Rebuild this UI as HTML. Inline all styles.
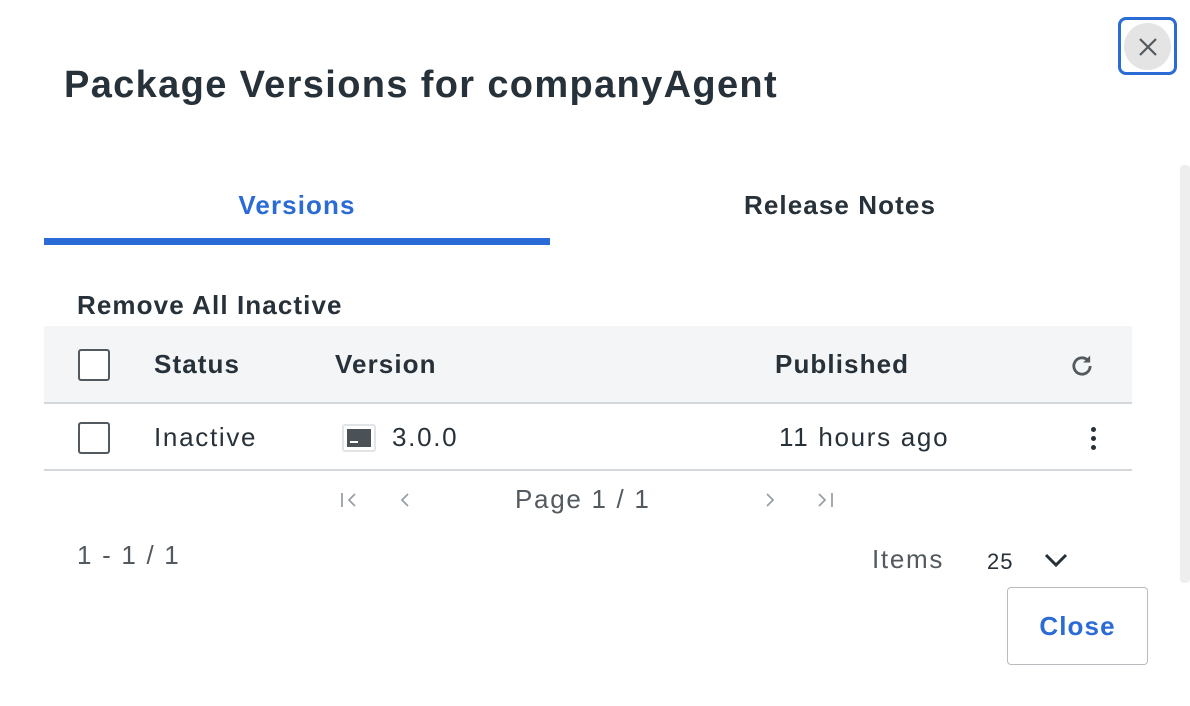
<!DOCTYPE html>
<html><head><style>
*{margin:0;padding:0;box-sizing:border-box}
body{width:1190px;height:706px;background:#fff;font-family:"Liberation Sans",sans-serif;color:#273139;position:relative;overflow:hidden}
.a{position:absolute;white-space:nowrap}
.b{letter-spacing:1.1px}
.r{letter-spacing:1.7px}
.cb{position:absolute;width:32px;height:32px;border:2.5px solid #525a60;border-radius:3px;background:#fff}
</style></head><body>
<div class="a" style="left:1118px;top:17px;width:59px;height:58px;border:3px solid #2b6bd6;border-radius:8px"></div>
<div class="a" style="left:1124px;top:23px;width:47px;height:47px;border-radius:50%;background:#e4e4e4"></div>
<svg class="a" style="left:1137px;top:36px" width="22" height="22"><path d="M3 3L19 19M19 3L3 19" stroke="#525a60" stroke-width="2.2"/></svg>
<div class="a" style="left:64px;top:64px;font-size:38px;font-weight:bold;letter-spacing:1.35px">Package Versions for companyAgent</div>
<div class="a b" style="left:44px;top:190px;width:506px;text-align:center;font-size:26px;font-weight:bold;color:#2b6bd6">Versions</div>
<div class="a b" style="left:590px;top:190px;width:500px;text-align:center;font-size:26px;font-weight:bold">Release Notes</div>
<div class="a" style="left:44px;top:238px;width:506px;height:7px;background:#2b6bd6"></div>
<div class="a" style="left:1180px;top:165px;width:10px;height:418px;background:#eee;border-radius:4px"></div>
<div class="a b" style="left:77px;top:290px;font-size:26px;font-weight:bold">Remove All Inactive</div>
<div class="a" style="left:44px;top:326px;width:1088px;height:78px;background:#f4f5f7;border-bottom:2px solid #d4d8db"></div>
<div class="cb" style="left:78px;top:349px"></div>
<div class="a b" style="left:154px;top:349px;font-size:26px;font-weight:bold">Status</div>
<div class="a b" style="left:335px;top:349px;font-size:26px;font-weight:bold">Version</div>
<div class="a b" style="left:775px;top:349px;font-size:26px;font-weight:bold">Published</div>
<svg class="a" style="left:1068px;top:352px" width="28" height="28" viewBox="0 0 24 24"><path d="M19 12a7 7 0 1 1-2.1-5" fill="none" stroke="#525a60" stroke-width="2.4"/><path d="M19 3v6h-6z" fill="#525a60"/></svg>
<div class="cb" style="left:78px;top:422px"></div>
<div class="a r" style="left:154px;top:422px;font-size:26px">Inactive</div>
<div class="a" style="left:342px;top:424px;width:34px;height:28px;border:2px solid #e2e4e6;border-radius:3px;background:#fff"></div>
<div class="a" style="left:347px;top:429px;width:24px;height:18px;background:#4a5157"></div>
<div class="a" style="left:350px;top:441px;width:8px;height:2px;background:#fff"></div>
<div class="a r" style="left:392px;top:422px;font-size:26px">3.0.0</div>
<div class="a r" style="left:779px;top:422px;font-size:26px">11 hours ago</div>
<div class="a" style="left:1091px;top:427px;width:5px;height:5px;border-radius:50%;background:#273139;box-shadow:0 9px 0 #273139,0 18px 0 #273139"></div>
<div class="a" style="left:44px;top:469px;width:1088px;height:2px;background:#d4d8db"></div>
<svg class="a" style="left:340px;top:491px" width="20" height="18"><path d="M2 2v14M15 3l-6 6 6 6" fill="none" stroke="#9aa0a6" stroke-width="1.8"/></svg>
<svg class="a" style="left:398px;top:491px" width="14" height="18"><path d="M10 3l-6 6 6 6" fill="none" stroke="#9aa0a6" stroke-width="1.8"/></svg>
<div class="a r" style="left:515px;top:484px;font-size:26px;color:#525a60">Page 1 / 1</div>
<svg class="a" style="left:763px;top:491px" width="14" height="18"><path d="M4 3l6 6-6 6" fill="none" stroke="#9aa0a6" stroke-width="1.8"/></svg>
<svg class="a" style="left:816px;top:491px" width="20" height="18"><path d="M3 3l6 6-6 6M16 2v14" fill="none" stroke="#9aa0a6" stroke-width="1.8"/></svg>
<div class="a r" style="left:77px;top:540px;font-size:26px;color:#525a60">1 - 1 / 1</div>
<div class="a r" style="left:872px;top:544px;font-size:26px;color:#525a60">Items</div>
<div class="a" style="left:987px;top:549px;font-size:22px;letter-spacing:1px">25</div>
<svg class="a" style="left:1043px;top:551px" width="26" height="18"><path d="M3 4l10 10 10-10" fill="none" stroke="#273139" stroke-width="3"/></svg>
<div class="a b" style="left:1007px;top:587px;width:141px;height:78px;border:1.5px solid #b8bcc0;border-radius:4px;font-size:26px;font-weight:bold;color:#2b6bd6;text-align:center;line-height:76px">Close</div>
</body></html>
